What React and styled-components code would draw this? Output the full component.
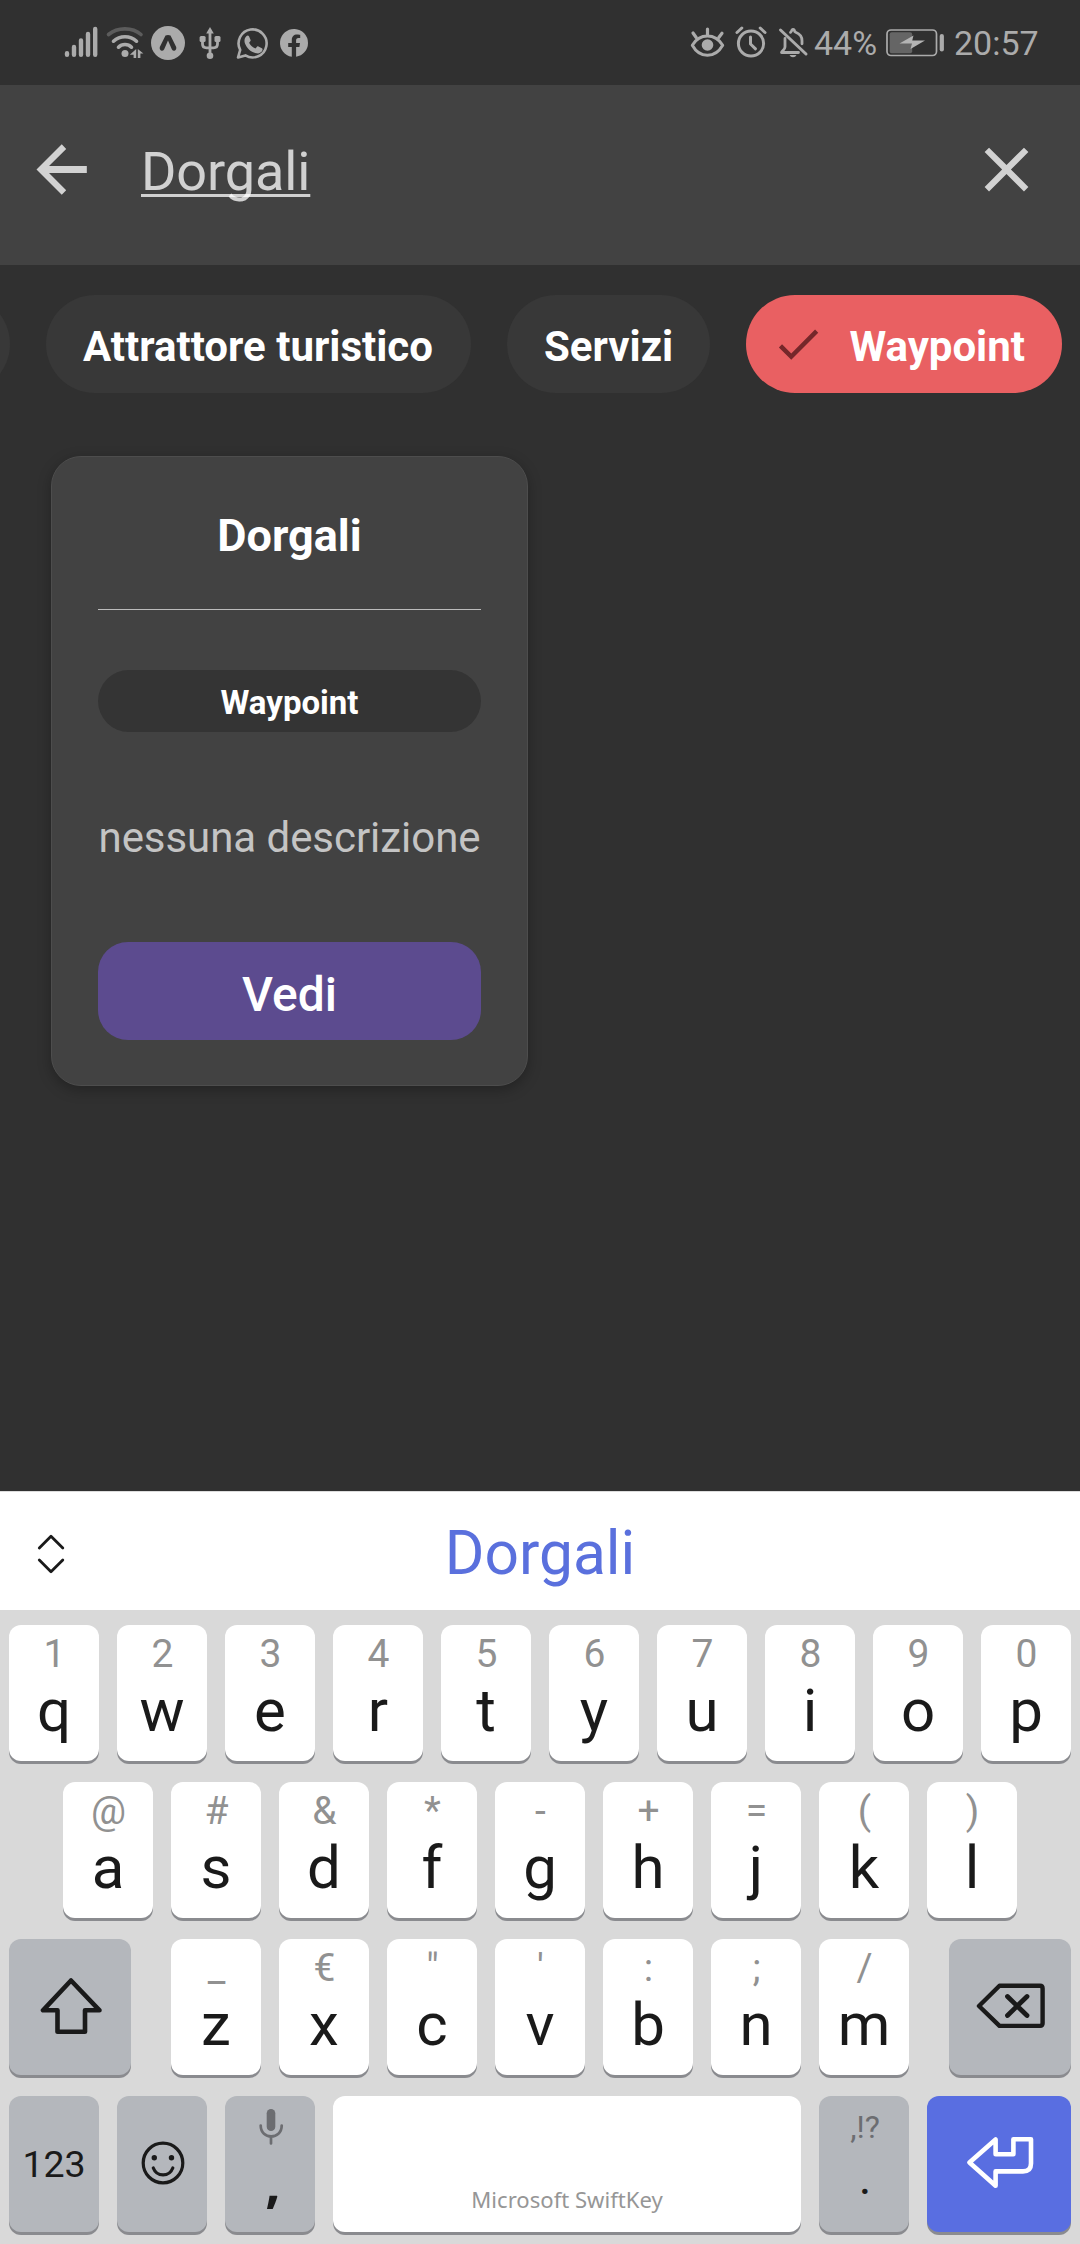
import React from "react";
import styled, { createGlobalStyle } from "styled-components";

const GlobalStyle = createGlobalStyle`
  *, *::before, *::after { box-sizing: border-box; }
  html, body { margin: 0; padding: 0; background: #303030; }
  body { font-family: Roboto, "Liberation Sans", sans-serif; }
  button { font: inherit; border: 0; padding: 0; margin: 0; }
`;

const Screen = styled.div`
  width: 1080px;
  height: 2244px;
  display: flex;
  flex-direction: column;
  background: #303030;
  overflow: hidden;
`;

/* ---------- status bar ---------- */

const StatusBar = styled.header`
  height: 85px;
  flex: none;
  display: flex;
  justify-content: space-between;
  padding: 0 40px 0 64px;
  color: #ababab;
  font-size: 34px;
  line-height: 86px;
`;

const StatusGroup = styled.div`
  display: flex;
  align-items: flex-start;
`;

const StatusText = styled.span`
  width: ${(p) => p.$width}px;
  white-space: nowrap;
`;

const Glyph = styled.svg`
  display: block;
  flex: none;
  fill: none;
  stroke-linecap: round;
  stroke-linejoin: round;
`;

function StatusIcon({ x, w, children }) {
  return (
    <Glyph width={w} height={85} viewBox={`${x} 0 ${w} 85`} stroke="#ababab">
      {children}
    </Glyph>
  );
}

/* ---------- search header ---------- */

const SearchBar = styled.div`
  height: 180px;
  flex: none;
  display: flex;
  align-items: flex-start;
  background: #424242;
  padding: 47px 36px 0 24px;
`;

const IconButton = styled.button`
  width: 75px;
  height: 75px;
  background: none;
  color: #d2d2d2;
`;

const Query = styled.div`
  flex: 1;
  margin-left: 42px;
  font-size: 54px;
  line-height: 80px;
  letter-spacing: -0.1px;
  color: rgba(255, 255, 255, 0.76);

  span {
    text-decoration: underline;
    text-decoration-skip-ink: none;
    text-decoration-thickness: 3px;
    text-underline-offset: 4px;
  }
`;

/* ---------- chips ---------- */

const ChipRow = styled.nav`
  display: flex;
  flex: none;
  justify-content: flex-end;
  gap: 36px;
  padding: 30px 18px 0 0;
`;

const Chip = styled.button`
  flex: none;
  height: 98px;
  width: ${(p) => p.$width}px;
  display: flex;
  align-items: center;
  justify-content: space-between;
  padding: 0 ${(p) => (p.$selected ? 37 : 36)}px 0 ${(p) => (p.$selected ? 25 : 37)}px;
  border-radius: 49px;
  background: ${(p) => (p.$selected ? "#e96062" : "#383838")};
  color: #fff;
  font-size: 42px;
  font-weight: 700;
  line-height: 50px;
  white-space: nowrap;
`;

const ChipLabel = styled.span`
  padding-top: 5px;
`;

/* ---------- result card ---------- */

const Results = styled.main`
  flex: 1;
  padding: 63px 51px 0;
`;

const Card = styled.article`
  width: 477px;
  height: 630px;
  display: flex;
  flex-direction: column;
  padding: 0 46px 0;
  border: 1px solid #4d4d4d;
  border-radius: 30px;
  background: #424242;
  box-shadow: 0 4px 14px rgba(0, 0, 0, 0.28);
  text-align: center;
`;

const CardTitle = styled.h2`
  margin: 48px 0 0;
  padding-bottom: 44px;
  height: 105px;
  border-bottom: 1px solid #bcbcbc;
  color: #fff;
  font-size: 45px;
  line-height: 62px;
  font-weight: 700;
`;

const Tag = styled.div`
  height: 62px;
  margin-top: 60px;
  border-radius: 31px;
  background: #343434;
  color: #fff;
  font-size: 33px;
  line-height: 65px;
  font-weight: 700;
`;

const Description = styled.p`
  margin: 75px -10px 0;
  color: #c4c4c4;
  font-size: 42px;
  line-height: 62px;
  letter-spacing: -0.05px;
  white-space: nowrap;
`;

const ViewButton = styled.button`
  height: 98px;
  margin-top: 73px;
  border-radius: 30px;
  background: #5c4b8f;
  color: #fff;
  font-size: 48px;
  font-weight: 500;
  line-height: 106px;
`;

/* ---------- keyboard ---------- */

const Keyboard = styled.section`
  flex: none;
  height: 753px;
  background: #d9d9d9;
`;

const Suggestions = styled.div`
  height: 119px;
  display: grid;
  grid-template-columns: 102px 1fr 102px;
  background: #fff;
  border-top: 1px solid #dcdcdc;
  color: #5a70dd;
  font-size: 60.5px;
  line-height: 123px;
  text-align: center;
`;

const Keys = styled.div`
  display: flex;
  flex-direction: column;
  gap: 21px;
  padding: 15px 9px 0;
`;

const KeyRow = styled.div`
  display: flex;
  justify-content: ${(p) => (p.$spread ? "space-between" : "center")};
  gap: 18px;
`;

const LetterGroup = styled.div`
  display: flex;
  gap: 18px;
`;

const tones = {
  light: "#ffffff",
  dark: "#b4b7bc",
  accent: "#596ee1",
};

const Key = styled.button`
  flex: none;
  width: ${(p) => p.$width || 90}px;
  height: 136px;
  display: flex;
  flex-direction: column;
  align-items: center;
  padding-top: ${(p) => (p.$top ?? 8)}px;
  border-radius: 12px;
  background: ${(p) => tones[p.$tone || "light"]};
  box-shadow: 0 3px 0 #8a8b8f;
  color: #1a1a1a;
`;

const Hint = styled.span`
  padding-left: 1px;
  font-size: 39px;
  line-height: 43px;
  color: #919191;
`;

const Letter = styled.span`
  font-size: 60px;
  line-height: 69px;
`;

const ModeLabel = styled.span`
  font-size: 37.5px;
  line-height: 136px;
`;

const Comma = styled.span`
  margin-top: -3px;
  padding-left: 6px;
  font-family: "Noto Sans", sans-serif;
  font-weight: 700;
  font-size: 54px;
  line-height: 60px;
`;

const MarksHint = styled.span`
  padding-left: 2px;
  font-size: 32px;
  line-height: 36px;
  color: #6c6d71;
  font-weight: 400;
`;

const Period = styled.span`
  padding-left: 2px;
  font-size: 48px;
  line-height: 56px;
  margin-top: 5px;
`;

const Brand = styled.span`
  font-family: "Noto Sans", "Open Sans", sans-serif;
  font-size: 22.1px;
  line-height: 28px;
  color: #969696;
`;

const row1 = ["1q", "2w", "3e", "4r", "5t", "6y", "7u", "8i", "9o", "0p"];
const row2 = ["@a", "#s", "&d", "*f", "-g", "+h", "=j", "(k", ")l"];
const row3 = ["_z", "€x", '"c', "'v", ":b", ";n", "/m"];

function LetterKeys({ keys }) {
  return keys.map(([hint, letter]) => (
    <Key key={letter}>
      <Hint>{hint}</Hint>
      <Letter>{letter}</Letter>
    </Key>
  ));
}

function Status() {
  return (
    <StatusBar>
      <StatusGroup>
        <StatusIcon x={64} w={39}>
          <g strokeWidth="4.4">
            <path d="M67 53.3v1.5M74 47v7.8M81 40.5v14.3M88 34v20.8M95.2 29v25.8" />
          </g>
        </StatusIcon>
        <StatusIcon x={103} w={44}>
          <path d="M108.5 34.5c9-7.5 24-7.5 32.5 0" stroke="#5c5c5c" strokeWidth="3.6" />
          <path d="M113.5 41.2c6.5-6 16.500-6 23 0" strokeWidth="3.6" />
          <path d="M118.500 47.200c3.500-3.600 9.500-3.600 13 0" strokeWidth="3.6" />
          <circle cx="125" cy="53.500" r="3.500" fill="#ababab" stroke="none" />
          <path d="M136.200 49v9h-2.600v-3.200h-3.800zM137.800 58v-9l5.600 4.400h-3v4.600z" fill="#ababab" stroke="none" />
        </StatusIcon>
        <StatusIcon x={147} w={42}>
          <circle cx="168" cy="43" r="17" fill="#ababab" stroke="none" />
          <path
            d="M165.500 35.600q2.500-1.400 5 0L176.200 47q.6 2.800-1.800 3.700-1.600.2-2.600-1.500L168 40.600l-3.800 8.600q-1 1.700-2.600 1.500-2.400-.9-1.800-3.700z"
            fill="#303030"
            stroke="none"
          />
        </StatusIcon>
        <StatusIcon x={189} w={42}>
          <path d="M210 31v24M202.500 40v4q0 3.800 4 3.800h7q4 0 4-3.800v-4" strokeWidth="2.800" />
          <path d="M210 27l3.800 6.500h-7.600z" fill="#ababab" stroke="none" />
          <rect x="199.600" y="36" width="6" height="6" rx="1.500" fill="#ababab" stroke="none" />
          <rect x="214.500" y="36" width="6" height="6" rx="1.500" fill="#ababab" stroke="none" />
          <circle cx="210" cy="55.800" r="3.300" fill="#ababab" stroke="none" />
        </StatusIcon>
        <StatusIcon x={231} w={42}>
          <path d="M238 57.500l2.200-7.600a14 14 0 1 1 5.200 5.500z" strokeWidth="2.600" />
          <path
            d="M246.300 36.200c1-1 2.200-.8 2.700.1l1.600 3.600c.3.800-.2 1.600-1.500 2.800 1.500 2.900 3.500 4.600 6.400 5.800 1.700-2 2.100-2.400 2.900-2l3.500 1.700c.9.500.8 1 .4 2.400-.8 2.200-3.600 3.200-5.800 2.700-6-1.400-9.800-5-11.700-10.300-.7-2.600-.2-5.100 1.500-6.800z"
            fill="#ababab"
            stroke="none"
          />
        </StatusIcon>
        <StatusIcon x={273} w={42}>
          <path
            d="M308 43a14 14 0 1 0-16.200 13.800V47h-3.600v-4h3.600v-3.100c0-3.500 2.100-5.500 5.300-5.500 1.500 0 3.100.3 3.100.3v3.400h-1.800c-1.700 0-2.300 1.100-2.300 2.200V43h3.900l-.6 4h-3.300v9.800A14 14 0 0 0 308 43z"
            fill="#ababab"
            stroke="none"
          />
        </StatusIcon>
      </StatusGroup>
      <StatusGroup>
        <StatusIcon x={688} w={40}>
          <path d="M692.300 45.200c7.400-12.300 22.800-12.300 30.400 0-7.600 13.400-23 13.400-30.400 0z" strokeWidth="3" />
          <circle cx="707.500" cy="45" r="5.800" fill="#ababab" stroke="none" />
          <path d="M707.500 29v5.500M693 33l3.200 4.500M722 33.300l-3.200 4.200" strokeWidth="3.200" />
        </StatusIcon>
        <StatusIcon x={728} w={44}>
          <circle cx="751" cy="43.500" r="12.600" strokeWidth="3" />
          <path d="M750.500 37v7l5 4.800" strokeWidth="3" />
          <path d="M737 32.500l4.800-4.500M765 32.500l-4.800-4.500" strokeWidth="3" />
        </StatusIcon>
        <StatusIcon x={772} w={42}>
          <path d="M780.500 30l25.500 24" strokeWidth="3" />
          <path
            d="M785 38.500v8.500c0 2.500-3.500 4.300-3.500 5.500h17M790.500 32.300q1.300-1 1.300-2 1.300-1.800 2.600 0 0 1.300 1.300 2c4 1.500 6.300 5 6.300 8.500v3"
            strokeWidth="2.800"
          />
          <path d="M789.500 55h7q-1 2.300-3.500 2.300t-3.500-2.300z" fill="#ababab" stroke="none" />
        </StatusIcon>
        <StatusText $width={70}>44%</StatusText>
        <StatusIcon x={884} w={70}>
          <rect x="887" y="30" width="49.500" height="25.500" rx="4" strokeWidth="1.700" />
          <rect x="889.700" y="32.300" width="22.500" height="21" rx="2" fill="#656565" stroke="none" />
          <path d="M941.800 36v13.500" strokeWidth="4.200" />
          <path d="M913.500 35.500l-1.300 5h12.800l-14.500 8.600 1.500-5.500h-12.500z" fill="#b4b4b4" stroke="none" />
        </StatusIcon>
        <StatusText $width={86}>20:57</StatusText>
      </StatusGroup>
    </StatusBar>
  );
}

export default function App() {
  return (
    <>
      <GlobalStyle />
      <Screen>
        <Status />

        <SearchBar>
          <IconButton aria-label="Indietro">
            <Glyph width="75" height="75" viewBox="0 0 24 24">
              <path
                fill="currentColor"
                d="M20.100 10.900V13.100H8L13.500 18.600L12.080 20.060L4 12L12.080 3.940L13.500 5.400L8 10.900H20.100Z"
              />
            </Glyph>
          </IconButton>
          <Query>
            <span>Dorgali</span>
          </Query>
          <IconButton aria-label="Cancella">
            <Glyph width="75" height="75" viewBox="0 0 24 24">
              <path
                fill="currentColor"
                d="M19 6.410L17.590 5L12 10.590L6.410 5L5 6.410L10.590 12L5 17.590L6.410 19L12 13.410L17.590 19L19 17.590L13.410 12L19 6.410Z"
              />
            </Glyph>
          </IconButton>
        </SearchBar>

        <ChipRow>
          <Chip $width={200} aria-hidden="true" />
          <Chip $width={425}>
            <ChipLabel>Attrattore turistico</ChipLabel>
          </Chip>
          <Chip $width={203}>
            <ChipLabel>Servizi</ChipLabel>
          </Chip>
          <Chip $width={316} $selected>
            <Glyph width="54" height="54" viewBox="0 0 24 24">
              <path
                fill="#75272a"
                d="M21 7L9 19L3.500 13.500L4.910 12.090L9 16.170L19.590 5.590L21 7Z"
              />
            </Glyph>
            <ChipLabel>Waypoint</ChipLabel>
          </Chip>
        </ChipRow>

        <Results>
          <Card>
            <CardTitle>Dorgali</CardTitle>
            <Tag>Waypoint</Tag>
            <Description>nessuna descrizione</Description>
            <ViewButton>Vedi</ViewButton>
          </Card>
        </Results>

        <Keyboard>
          <Suggestions>
            <Glyph width="102" height="118" viewBox="0 1492 102 118">
              <path
                d="M39.300 1548L51 1536.200L62.800 1548M39.300 1560L51 1571.800L62.800 1560"
                stroke="#1a1a1a"
                strokeWidth="2.800"
              />
            </Glyph>
            <span>Dorgali</span>
          </Suggestions>
          <Keys>
            <KeyRow>
              <LetterKeys keys={row1} />
            </KeyRow>
            <KeyRow>
              <LetterKeys keys={row2} />
            </KeyRow>
            <KeyRow $spread>
              <Key $tone="dark" $width={122} $top={0} aria-label="Maiuscole">
                <Glyph width="122" height="136" viewBox="9 1939 122 136">
                  <path
                    d="M71 1980.500L43 2010.300H57.500V2031.800H85V2010.300H99.500Z"
                    stroke="#1a1a1a"
                    strokeWidth="4.600"
                  />
                </Glyph>
              </Key>
              <LetterGroup>
                <LetterKeys keys={row3} />
              </LetterGroup>
              <Key $tone="dark" $width={122} $top={0} aria-label="Elimina">
                <Glyph width="122" height="136" viewBox="949 1939 122 136">
                  <path
                    d="M999.500 1985.800H1040q2.600 0 2.600 2.600V2023.300q0 2.600-2.600 2.600H999.500L979 2006Z"
                    stroke="#1a1a1a"
                    strokeWidth="4.400"
                  />
                  <path
                    d="M1007.500 1996.500l19.500 19M1027 1996.500l-19.500 19"
                    stroke="#1a1a1a"
                    strokeWidth="4.800"
                  />
                </Glyph>
              </Key>
            </KeyRow>
            <KeyRow>
              <Key $tone="dark" $top={0}>
                <ModeLabel>123</ModeLabel>
              </Key>
              <Key $tone="dark" $top={0} aria-label="Emoji">
                <Glyph width="90" height="136" viewBox="117 2096 90 136">
                  <circle cx="163" cy="2163" r="19.800" stroke="#1a1a1a" strokeWidth="3.200" />
                  <circle cx="154.300" cy="2157.700" r="2.700" fill="#1a1a1a" />
                  <circle cx="171.500" cy="2157.700" r="2.700" fill="#1a1a1a" />
                  <path d="M153.300 2168c3.500 9.200 16 9.200 19.500 0" stroke="#1a1a1a" strokeWidth="3.200" />
                </Glyph>
              </Key>
              <Key $tone="dark" $top={0}>
                <Glyph width="90" height="58" viewBox="225 2096 90 58">
                  <rect x="266.700" y="2109" width="8.600" height="22" rx="4.300" fill="#6c6d71" />
                  <path
                    d="M260.700 2125.500c0 14.600 21 14.600 21 0M271 2136.500v7"
                    stroke="#6c6d71"
                    strokeWidth="2.700"
                  />
                </Glyph>
                <Comma>,</Comma>
              </Key>
              <Key $width={468} $top={89}>
                <Brand>Microsoft SwiftKey</Brand>
              </Key>
              <Key $tone="dark" $top={13}>
                <MarksHint>,!?</MarksHint>
                <Period>.</Period>
              </Key>
              <Key $tone="accent" $width={144} $top={0} aria-label="Invio">
                <Glyph width="144" height="136" viewBox="927 2096 144 136">
                  <path
                    d="M969.500 2162.500L995.600 2139.500V2154.300H1013.400V2139.300H1031V2163.500Q1031 2171.400 1023 2171.400H995.600V2185.800Z"
                    stroke="#fff"
                    strokeWidth="4.600"
                  />
                </Glyph>
              </Key>
            </KeyRow>
          </Keys>
        </Keyboard>
      </Screen>
    </>
  );
}
